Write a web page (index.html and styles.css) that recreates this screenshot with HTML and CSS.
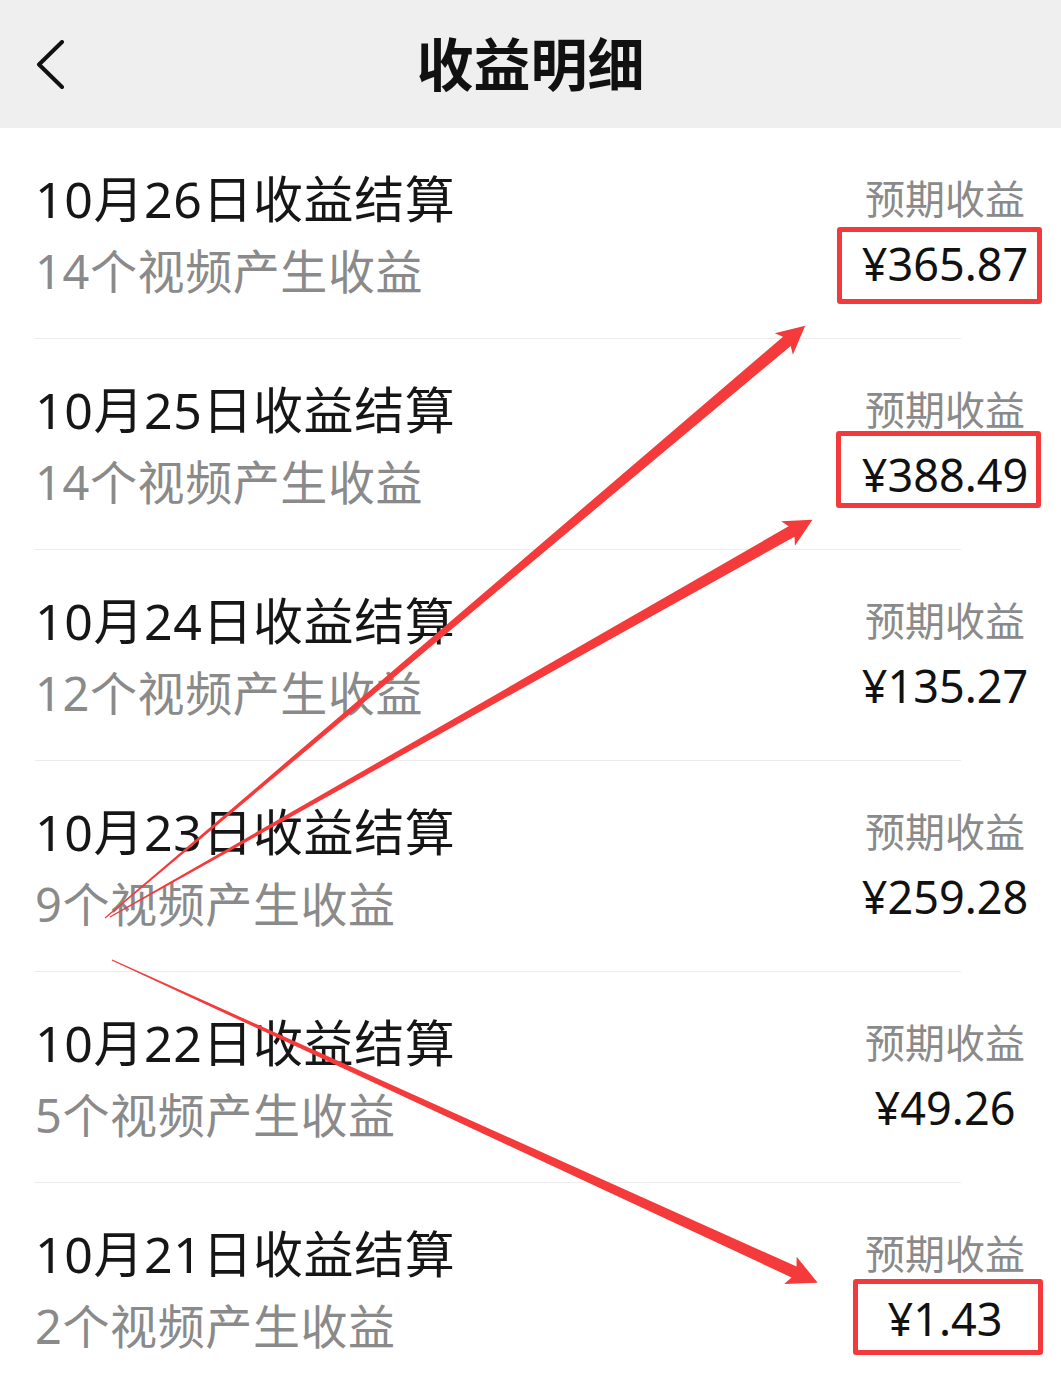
FILE: index.html
```html
<!DOCTYPE html>
<html lang="zh-CN">
<head>
<meta charset="utf-8">
<title>收益明细</title>
<link rel="stylesheet" href="styles.css">
</head>
<body>
<div class="page">
  <header class="topbar">
    <div class="back">
      <svg width="30" height="50" viewBox="0 0 30 50"><polyline points="26,2 3,24.5 26,47" fill="none" stroke="#111" stroke-width="4" stroke-linecap="round" stroke-linejoin="round"/></svg>
    </div>
    <h1 class="title">收益明细</h1>
    <div></div>
  </header>

  <main class="list">
    <div class="row">
      <div class="info"><div class="date">10月26日收益结算</div><div class="sub">14个视频产生收益</div></div>
      <div class="money"><div class="label">预期收益</div><div class="amount hl hl-a">¥365.87</div></div>
    </div>
    <div class="sep"></div>
    <div class="row">
      <div class="info"><div class="date">10月25日收益结算</div><div class="sub">14个视频产生收益</div></div>
      <div class="money"><div class="label">预期收益</div><div class="amount hl hl-b">¥388.49</div></div>
    </div>
    <div class="sep"></div>
    <div class="row">
      <div class="info"><div class="date">10月24日收益结算</div><div class="sub">12个视频产生收益</div></div>
      <div class="money"><div class="label">预期收益</div><div class="amount">¥135.27</div></div>
    </div>
    <div class="sep"></div>
    <div class="row">
      <div class="info"><div class="date">10月23日收益结算</div><div class="sub">9个视频产生收益</div></div>
      <div class="money"><div class="label">预期收益</div><div class="amount">¥259.28</div></div>
    </div>
    <div class="sep"></div>
    <div class="row">
      <div class="info"><div class="date">10月22日收益结算</div><div class="sub">5个视频产生收益</div></div>
      <div class="money"><div class="label">预期收益</div><div class="amount">¥49.26</div></div>
    </div>
    <div class="sep"></div>
    <div class="row">
      <div class="info"><div class="date">10月21日收益结算</div><div class="sub">2个视频产生收益</div></div>
      <div class="money"><div class="label">预期收益</div><div class="amount hl hl-c">¥1.43</div></div>
    </div>
  </main>

  <svg class="arrows" width="1061" height="1379" viewBox="0 0 1061 1379">
    <g fill="#f43a3a">
      <polygon transform="translate(105 918) rotate(-40.22)" points="0,-0.6 893,-6 889,-14 917,0 889,14 893,6 0,0.6"/>
      <polygon transform="translate(110 917) rotate(-29.49)" points="0,-0.6 783,-6 779,-14 807,0 779,14 783,6 0,0.6"/>
      <polygon transform="translate(112 960) rotate(24.58)" points="0,-0.6 750,-6 746,-15 776,0 746,15 750,6 0,0.6"/>
    </g>
  </svg>
</div>
</body>
</html>
```

FILE: styles.css
```css
* { box-sizing: border-box; }
html, body { margin: 0; padding: 0; background: #ffffff; }
body {
  font-family: "Noto Sans", "Noto Sans CJK SC", sans-serif;
  color: #161616;
}
.page {
  position: relative;
  width: 1061px;
  min-height: 1379px;
  overflow: hidden;
}
.topbar {
  height: 128px;
  background: #efefef;
  display: grid;
  grid-template-columns: 1fr auto 1fr;
  align-items: center;
}
.back {
  padding-left: 36px;
  display: flex;
  align-items: center;
  padding-top: 2px;
}
.title {
  margin: 0;
  font-size: 57px;
  font-weight: 700;
  line-height: 72px;
  color: #111;
}
.row {
  display: flex;
  justify-content: space-between;
  align-items: flex-start;
  padding: 35px 26px 31px 35px;
}
.info { display: flex; flex-direction: column; }
.date {
  font-size: 50px;
  line-height: 72px;
  letter-spacing: 0.6px;
  color: #161616;
}
.sub {
  font-size: 47px;
  line-height: 72px;
  letter-spacing: 0.6px;
  color: #8a8a8a;
}
.money {
  width: 180px;
  text-align: center;
  display: flex;
  flex-direction: column;
}
.label {
  font-size: 40px;
  line-height: 72px;
  color: #8a8a8a;
}
.amount {
  font-size: 45px;
  line-height: 58px;
  color: #111;
}
.hl { position: relative; }
.hl::after {
  content: "";
  position: absolute;
  border: 5px solid #f23a3d;
  border-radius: 3px;
}
.hl-a::after { top: -8px; bottom: -11px; left: -18px; right: -7px; }
.hl-b::after { top: -15px; bottom: -4px; left: -19px; right: -6px; }
.hl-c::after { top: -11px; bottom: -7px; left: -2px; right: -8px; }
.sep {
  height: 1px;
  background: #ececec;
  margin: 0 100px 0 35px;
}
.arrows {
  position: absolute;
  top: 0;
  left: 0;
  pointer-events: none;
}
```
